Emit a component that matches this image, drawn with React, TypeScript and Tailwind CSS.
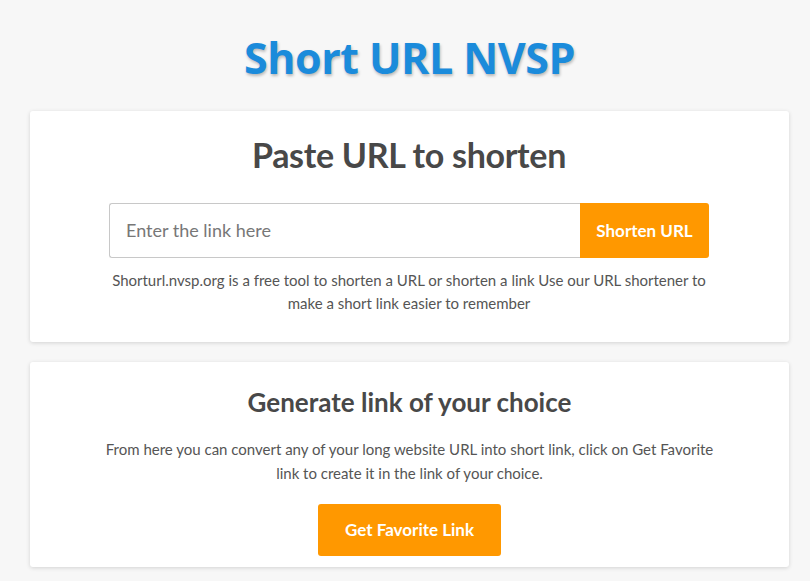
import React from 'react';

const heading = { fontFamily: '"Open Sans", "Noto Sans", sans-serif' };
const body = { fontFamily: 'Lato, "Liberation Sans", sans-serif' };

const Card: React.FC<{ children: React.ReactNode; className?: string }> = ({ children, className = '' }) => (
  <div className={`bg-white rounded-[3px] shadow-[0_1px_4px_rgba(0,0,0,0.15)] ${className}`}>{children}</div>
);

export default function App() {
  return (
    <div className="min-h-[581px] bg-[#f7f7f7] pl-[30px] pr-[21px] pt-[26px] text-[#444]" style={body}>
      <h1
        className="text-center text-[43px] font-bold leading-[64px] tracking-[-0.5px] text-[#1b8bdb] [text-shadow:1px_2px_3px_rgba(0,0,0,0.25)]"
        style={heading}
      >
        Short URL NVSP
      </h1>

      <Card className="mt-[21px] pl-[79px] pr-[80px] pt-[19px] pb-[27px] text-center">
        <h2 className="text-[34px] font-bold leading-[50px] tracking-[-0.3px] text-[#484848]">Paste URL to shorten</h2>
        <div className="mt-[23px] flex h-[55px]">
          <input
            type="text"
            placeholder="Enter the link here"
            className="flex-1 rounded-l-[3px] border border-[#c8c8c8] border-r-0 px-[16px] text-[18px] text-[#444] outline-none placeholder:text-[#777]"
          />
          <button className="w-[129px] rounded-r-[3px] bg-[#ff9800] text-[17px] font-bold text-white">
            Shorten URL
          </button>
        </div>
        <p className="-mx-[10px] mt-[11px] text-[15px] leading-[23px] text-[#555]">
          Shorturl.nvsp.org is a free tool to shorten a URL or shorten a link Use our URL shortener to make a short link easier to remember
        </p>
      </Card>

      <Card className="mt-[20px] px-[70px] pt-[22px] pb-[11px] text-center">
        <h2 className="text-[26px] font-bold leading-[36px] text-[#484848]">Generate link of your choice</h2>
        <p className="mt-[17px] text-[15px] leading-[24px] text-[#555]">
          From here you can convert any of your long website URL into short link, click on Get Favorite link to create it in the link of your choice.
        </p>
        <button className="mt-[19px] h-[52px] w-[183px] rounded-[3px] bg-[#ff9800] text-[17px] font-bold text-white">
          Get Favorite Link
        </button>
      </Card>
    </div>
  );
}
